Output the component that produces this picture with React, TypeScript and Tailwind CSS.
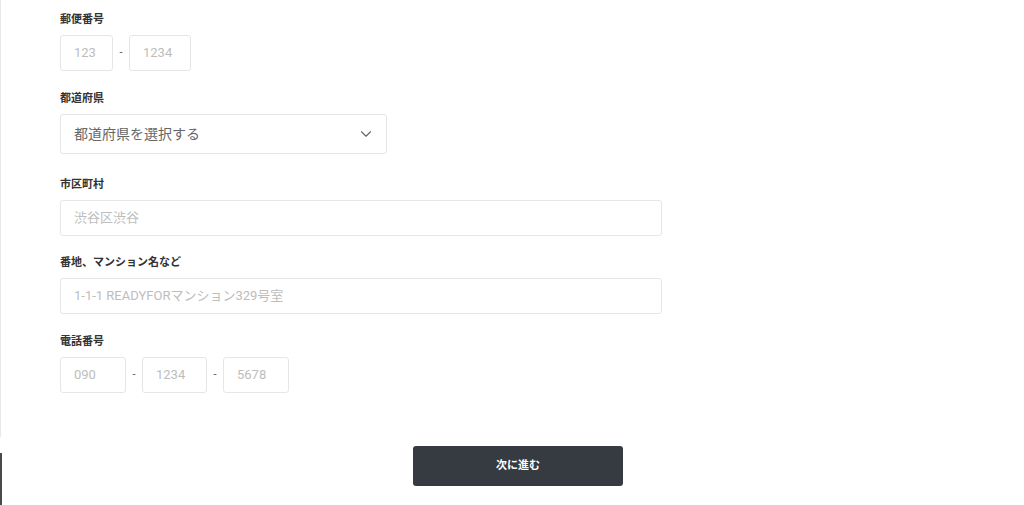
import { ChevronDown } from 'lucide-react'

const font = "font-['Roboto','Noto_Sans_CJK_JP',sans-serif]"

const Label = ({ children }: { children: string }) => (
  <div className="text-[11px] leading-[16px] font-bold text-[#333] mb-[7px]">{children}</div>
)

const Box = ({ placeholder, width }: { placeholder: string; width: string }) => (
  <div
    className={`${width} h-[36px] border border-[#e6e6e6] rounded-[3px] flex items-center px-[13px] text-[13px] text-[#bdbdbd]`}
  >
    {placeholder}
  </div>
)

const Dash = () => <span className="text-[11px] text-[#555] w-[8px] text-center">-</span>

const App = () => {
  return (
    <div className={`${font} relative w-[1024px] h-[505px] bg-white overflow-hidden`}>
      <div className="absolute left-0 top-0 h-[437px] w-px bg-[#e8e8e8]" />
      <div className="absolute left-0 top-[453px] h-[52px] w-[2px] bg-[#4a4a4a]" />

      <div className="pl-[60px] pt-[12px] flex flex-col">
        <div className="mb-[20px]">
          <Label>郵便番号</Label>
          <div className="flex items-center gap-[4px]">
            <Box placeholder="123" width="w-[53px]" />
            <Dash />
            <Box placeholder="1234" width="w-[62px]" />
          </div>
        </div>

        <div className="mb-[23px]">
          <Label>都道府県</Label>
          <div className="w-[327px] h-[40px] border border-[#e6e6e6] rounded-[3px] flex items-center justify-between pl-[13px] pr-[11px] text-[14px] text-[#666]">
            <span>都道府県を選択する</span>
            <ChevronDown size={18} strokeWidth={1.5} className="text-[#666]" />
          </div>
        </div>

        <div className="mb-[19px]">
          <Label>市区町村</Label>
          <Box placeholder="渋谷区渋谷" width="w-[602px]" />
        </div>

        <div className="mb-[20px]">
          <Label>番地、マンション名など</Label>
          <Box placeholder="1-1-1 READYFORマンション329号室" width="w-[602px]" />
        </div>

        <div>
          <Label>電話番号</Label>
          <div className="flex items-center gap-[4px]">
            <Box placeholder="090" width="w-[66px]" />
            <Dash />
            <Box placeholder="1234" width="w-[65px]" />
            <Dash />
            <Box placeholder="5678" width="w-[66px]" />
          </div>
        </div>
      </div>

      <div className="flex pl-[413px] pt-[53px]">
        <button className="w-[210px] h-[40px] bg-[#363a41] rounded-[3px] text-white text-[11px] font-bold">
          次に進む
        </button>
      </div>
    </div>
  )
}

export default App
